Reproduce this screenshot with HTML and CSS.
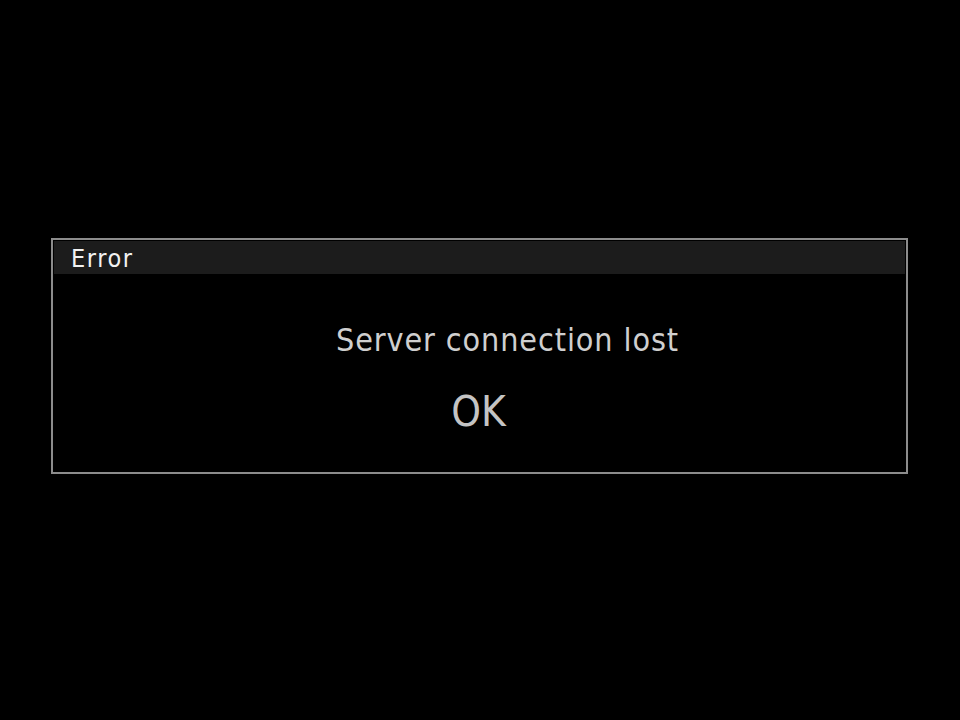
FILE: index.html
```html
<!DOCTYPE html>
<html>
<head>
<meta charset="utf-8">
<link rel="stylesheet" href="styles.css">
</head>
<body>
<div class="dialog">
  <div class="titlebar"><span class="title">Error</span></div>
  <div class="content">
    <div class="message">Server connection lost</div>
    <div class="ok">OK</div>
  </div>
</div>
</body>
</html>
```
FILE: styles.css
```css
html, body {
  margin: 0;
  padding: 0;
  background: #000;
  width: 960px;
  height: 720px;
  overflow: hidden;
}
body {
  font-family: "DejaVu Sans", "Liberation Sans", sans-serif;
  padding-top: 238px;
  padding-left: 51px;
  box-sizing: border-box;
}
.dialog {
  width: 857px;
  height: 236px;
  box-sizing: border-box;
  border: 2px solid #8c8c8c;
  padding: 1px;
  display: flex;
  flex-direction: column;
}
.titlebar {
  height: 33px;
  background: #1c1c1c;
  display: flex;
  align-items: center;
  padding-left: 17px;
}
.title {
  color: #f2f2f2;
  font-size: 25px;
  line-height: 1;
  margin-top: 1px;
  letter-spacing: 1.6px;
  font-family: "DejaVu Sans Condensed", "DejaVu Sans", sans-serif;
}
.content {
  display: flex;
  flex-direction: column;
  align-items: center;
}
.message {
  color: #cfcfcf;
  font-size: 32px;
  line-height: 1;
  margin-top: 50px;
  margin-left: 56px;
  letter-spacing: 0.9px;
  font-family: "DejaVu Sans Condensed", "DejaVu Sans", sans-serif;
}
.ok {
  color: #c4c4c4;
  font-size: 42px;
  line-height: 1;
  margin-top: 35px;
  margin-left: -2px;
  font-family: "DejaVu Sans Condensed", "DejaVu Sans", sans-serif;
}
```
